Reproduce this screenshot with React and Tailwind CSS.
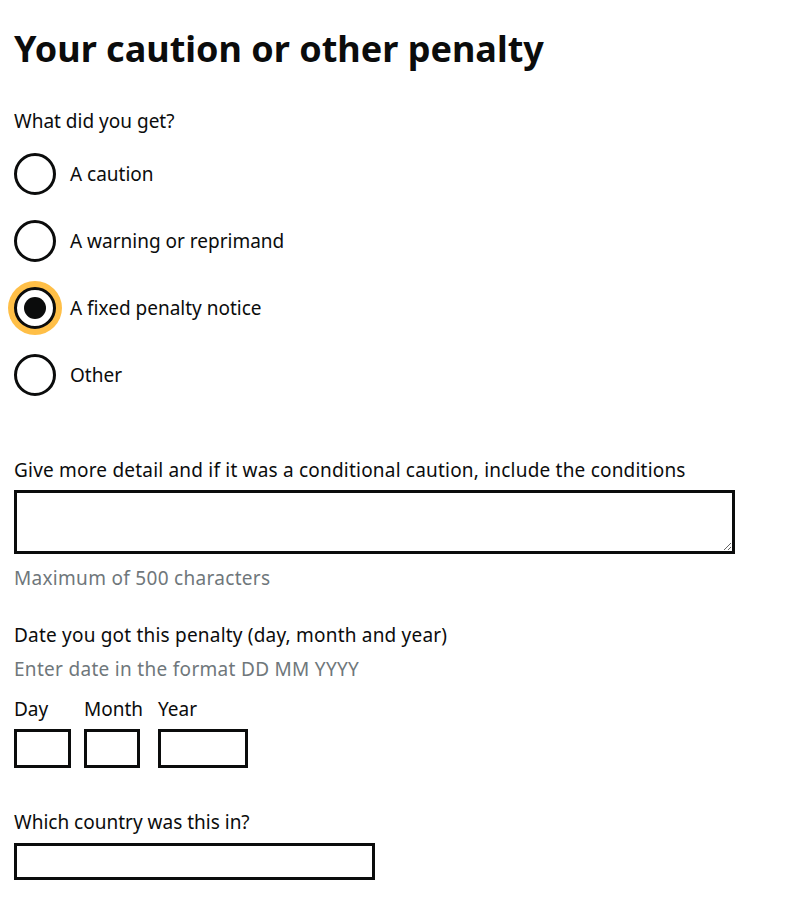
import React, { useState } from 'react';

const options = ['A caution', 'A warning or reprimand', 'A fixed penalty notice', 'Other'];

const Radio = ({ label, checked, onSelect }) => (
  <label className="flex items-center gap-[14px] cursor-pointer" onClick={onSelect}>
    <span
      className={`w-[42px] h-[42px] rounded-full border-[3px] border-[#0b0c0c] bg-white flex items-center justify-center shrink-0 ${
        checked ? 'ring-[6px] ring-[#ffbf47]' : ''
      }`}
    >
      {checked && <span className="w-[22px] h-[22px] rounded-full bg-[#0b0c0c]" />}
    </span>
    <span className="text-[19px] leading-[25px] text-[#0b0c0c]">{label}</span>
  </label>
);

const App = () => {
  const [choice, setChoice] = useState(2);

  return (
    <div className="min-h-[900px] bg-white px-[14px] text-[#0b0c0c]" style={{ fontFamily: '"Noto Sans", Lato, sans-serif' }}>
      <h1 className="pt-[24px] text-[36px] leading-[50px] font-bold">Your caution or other penalty</h1>

      <div className="mt-[35px] text-[19px] leading-[25px]">What did you get?</div>
      <div className="mt-[19px] flex flex-col gap-[25px]">
        {options.map((o, i) => (
          <Radio key={o} label={o} checked={choice === i} onSelect={() => setChoice(i)} />
        ))}
      </div>

      <div className="mt-[62px] text-[19px] leading-[25px] tracking-[0.2px]">
        Give more detail and if it was a conditional caution, include the conditions
      </div>
      <textarea className="mt-[7px] block w-[721px] h-[64px] border-[3px] border-[#0b0c0c] outline-none" />
      <div className="mt-[12px] text-[19px] leading-[25px] text-[#6f777b] tracking-[0.3px]">Maximum of 500 characters</div>

      <div className="mt-[32px] text-[19px] leading-[25px] tracking-[0.2px]">Date you got this penalty (day, month and year)</div>
      <div className="mt-[9px] text-[19px] leading-[25px] text-[#6f777b] tracking-[0.3px]">Enter date in the format DD MM YYYY</div>
      <div className="mt-[15px] flex gap-[13px]">
        <div className="flex flex-col">
          <span className="text-[19px] leading-[25px]">Day</span>
          <input className="mt-[7px] w-[57px] h-[39px] border-[3px] border-[#0b0c0c] outline-none" />
        </div>
        <div className="flex flex-col w-[56px]">
          <span className="text-[19px] leading-[25px] whitespace-nowrap">Month</span>
          <input className="mt-[7px] w-[56px] h-[39px] border-[3px] border-[#0b0c0c] outline-none" />
        </div>
        <div className="flex flex-col ml-[5px]">
          <span className="text-[19px] leading-[25px]">Year</span>
          <input className="mt-[7px] w-[90px] h-[39px] border-[3px] border-[#0b0c0c] outline-none" />
        </div>
      </div>

      <div className="mt-[42px] text-[19px] leading-[25px]">Which country was this in?</div>
      <input className="mt-[8px] block w-[361px] h-[37px] border-[3px] border-[#0b0c0c] outline-none" />
    </div>
  );
};

export default App;
